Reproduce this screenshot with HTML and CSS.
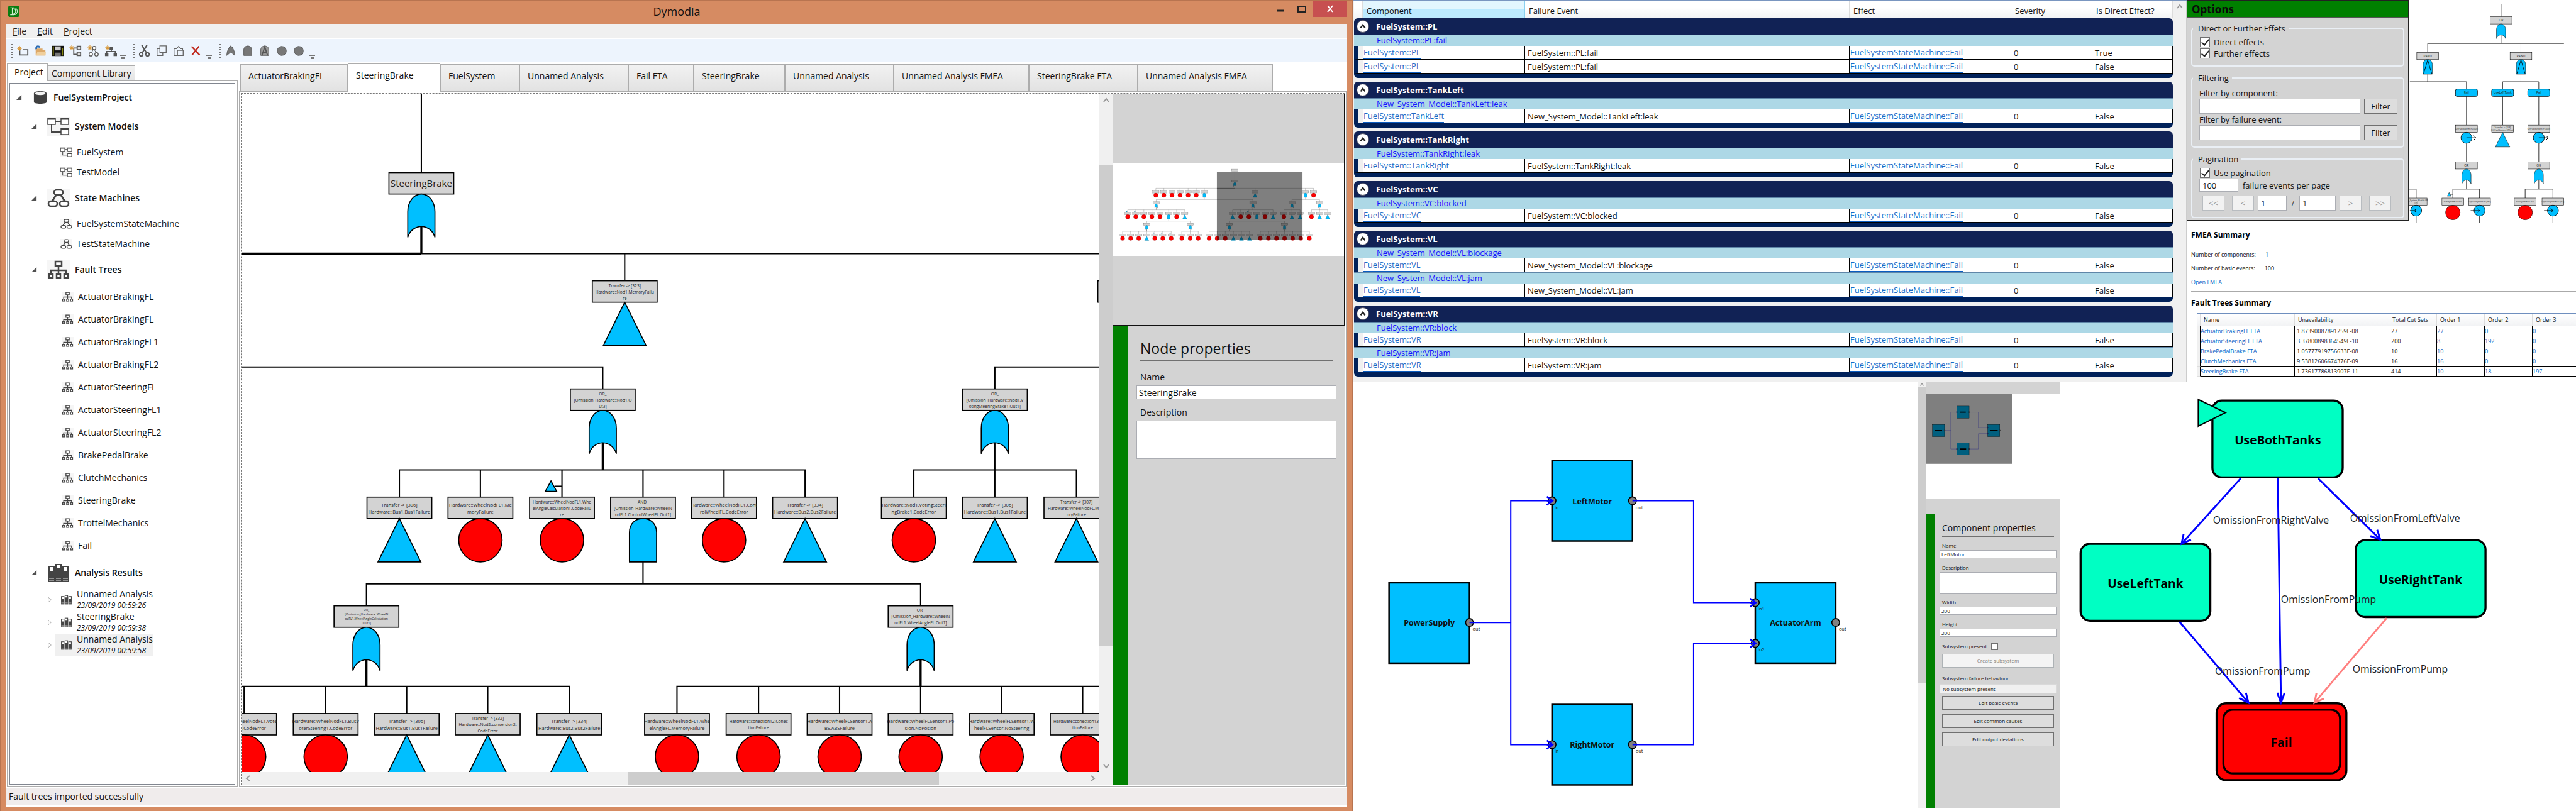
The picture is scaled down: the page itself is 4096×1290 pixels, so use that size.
FILE: index.html
```html
<!DOCTYPE html>
<html lang="en">
<head>
<meta charset="utf-8">
<title>Dymodia</title>
<link rel="stylesheet" href="styles.css">
</head>
<body>
<svg class="defs" width="0" height="0" aria-hidden="true">
  <defs>
    <g id="n-box"><rect x="-62" y="0" width="124" height="41" fill="#d3d3d3" stroke="#000" stroke-width="2"/></g>
    <g id="n-or"><use href="#n-box"/><path d="M-26 124V75C-26 55-14 41 0 41S26 55 26 75V124C22 111 12 104 0 103C-12 104-22 111-26 124Z" fill="#00bfff" stroke="#000" stroke-width="2"/></g>
    <g id="n-and"><use href="#n-box"/><path d="M-26 124V68C-26 50-14 41 0 41S26 50 26 68V124Z" fill="#00bfff" stroke="#000" stroke-width="2"/></g>
    <g id="n-pand"><use href="#n-and"/><path d="M-24 124L0 43L24 124" fill="none" stroke="#000" stroke-width="3"/></g>
    <g id="n-be"><use href="#n-box"/><circle cx="0" cy="82.500" r="41.500" fill="#f00" stroke="#000" stroke-width="2"/></g>
    <g id="n-tr"><use href="#n-box"/><path d="M0 41L41 124H-41Z" fill="#00bfff" stroke="#000" stroke-width="2"/></g>
    <g id="n-tag"><path d="M-21 -31L-10 -11H-32Z" fill="#00bfff" stroke="#000" stroke-width="2"/><path d="M-14 -21H0" stroke="#000" stroke-width="2"/></g>

    <g id="fault-tree">
      <g fill="none" stroke="#000" stroke-width="2.500">
        <path d="M805 160V331M-711 538V486M-556 538V486M-401 538V486M-246 538V486M-91 538V486M64 538V486M219 538V486M1194 538V486M2161 538V486M2316 538V486M-711 486H2316"/>
        <path d="M219 662V703M-704 745V703H1152V745M2161 662V703M1902 745V703H2432V745"/>
        <path d="M-1251 952V900H-156V952M-1096 952V900M-941 952V900M-786 952V900M-631 952V900M-465 952V900M-311 952V900"/>
        <path d="M763 952V900H1539V952M918 952V900M1074 952V900M1229 952V900M1384 952V900M1747 952V900H2058V952M1902 952V848"/>
        <path d="M2277 952V900H2587V952M2432 952V848"/>
        <path d="M-465 1076V1118M-886 1160V1118H-51V1160M1229 1076V1118M700 1160V1118H1760V1160"/>
        <path d="M-1349 1366V1314H-416V1366M-1195 1366V1314M-1040 1366V1314M-886 1366V1263M-732 1366V1314M-578 1366V1314M-213 1366V1314H103V1366M-51 1366V1263"/>
        <path d="M311 1366V1314H1088V1366M466 1366V1314M622 1366V1314M777 1366V1314M932 1366V1314M1294 1366V1314H2236V1366M1450 1366V1314M1605 1366V1314M1760 1366V1314M1915 1366V1314M2070 1366V1314"/>
      </g>
      <g fill="none" stroke="#000" stroke-width="4">
        <path d="M805 434V486M461 486H805M-704 848V900M1152 848V900M700 1263V1314M1760 1263V1314M-886 1263V1314"/>
      </g>
      <use href="#n-box" x="805" y="120"/>
      <use href="#n-or" x="805" y="331"/>
      <use href="#n-be" x="-711" y="538"/><use href="#n-be" x="-556" y="538"/><use href="#n-be" x="-401" y="538"/><use href="#n-be" x="-246" y="538"/><use href="#n-be" x="-91" y="538"/><use href="#n-be" x="64" y="538"/>
      <use href="#n-and" x="219" y="538"/><use href="#n-tr" x="1194" y="538"/><use href="#n-and" x="2161" y="538"/><use href="#n-be" x="2316" y="538"/>
      <use href="#n-or" x="-704" y="745"/><use href="#n-or" x="1152" y="745"/><use href="#n-or" x="1902" y="745"/><use href="#n-or" x="2432" y="745"/>
      <use href="#n-be" x="-1251" y="952"/><use href="#n-be" x="-1096" y="952"/><use href="#n-be" x="-941" y="952"/><use href="#n-be" x="-786" y="952"/><use href="#n-be" x="-631" y="952"/><use href="#n-and" x="-465" y="952"/><use href="#n-be" x="-311" y="952"/><use href="#n-tr" x="-156" y="952"/>
      <use href="#n-tag" x="-1251" y="952"/><use href="#n-tag" x="-1096" y="952"/>
      <use href="#n-tr" x="763" y="952"/><use href="#n-be" x="918" y="952"/><use href="#n-be" x="1074" y="952"/><use href="#n-tag" x="1074" y="952"/><use href="#n-and" x="1229" y="952"/><use href="#n-be" x="1384" y="952"/><use href="#n-tr" x="1539" y="952"/>
      <use href="#n-be" x="1747" y="952"/><use href="#n-tr" x="1902" y="952"/><use href="#n-tr" x="2058" y="952"/>
      <use href="#n-be" x="2277" y="952"/><use href="#n-tr" x="2432" y="952"/><use href="#n-tr" x="2587" y="952"/>
      <use href="#n-or" x="-886" y="1160"/><use href="#n-or" x="-51" y="1160"/><use href="#n-or" x="700" y="1160"/><use href="#n-or" x="1760" y="1160"/>
      <use href="#n-be" x="-1349" y="1366"/><use href="#n-be" x="-1195" y="1366"/><use href="#n-be" x="-1040" y="1366"/><use href="#n-tr" x="-886" y="1366"/><use href="#n-be" x="-732" y="1366"/><use href="#n-be" x="-578" y="1366"/><use href="#n-be" x="-416" y="1366"/>
      <use href="#n-tag" x="-732" y="1366"/><use href="#n-tag" x="-578" y="1366"/><use href="#n-tag" x="-416" y="1366"/>
      <use href="#n-be" x="-213" y="1366"/><use href="#n-be" x="-51" y="1366"/><use href="#n-be" x="103" y="1366"/>
      <use href="#n-be" x="311" y="1366"/><use href="#n-be" x="466" y="1366"/><use href="#n-be" x="622" y="1366"/><use href="#n-tr" x="777" y="1366"/><use href="#n-tr" x="932" y="1366"/><use href="#n-tr" x="1088" y="1366"/>
      <use href="#n-be" x="1294" y="1366"/><use href="#n-be" x="1450" y="1366"/><use href="#n-be" x="1605" y="1366"/><use href="#n-be" x="1760" y="1366"/><use href="#n-be" x="1915" y="1366"/><use href="#n-be" x="2070" y="1366"/><use href="#n-be" x="2236" y="1366"/>
    </g>

    <g id="port"><circle r="7.500" fill="#808080" stroke="#000" stroke-width="2"/></g>
    <g id="arrow"><path d="M-10 -8L1 0L-10 8M-10 0H0" fill="none" stroke="#00f" stroke-width="3"/></g>
    <g id="block"><rect width="154" height="154" fill="#00bfff" stroke="#000" stroke-width="3"/></g>
    <g id="system-model">
      <use href="#block" x="2657" y="1115"/><use href="#block" x="2969" y="881"/><use href="#block" x="2969" y="1348"/><use href="#block" x="3358" y="1115"/>
      <use href="#port" x="2811" y="1191"/><use href="#port" x="2969" y="958"/><use href="#port" x="3123" y="958"/><use href="#port" x="2969" y="1425"/><use href="#port" x="3123" y="1425"/><use href="#port" x="3358" y="1153"/><use href="#port" x="3358" y="1231"/><use href="#port" x="3512" y="1191"/>
      <path d="M2811 1191H2890M2968 958H2890V1425H2968M3123 958H3240V1153H3358M3123 1425H3240V1231H3358" fill="none" stroke="#00f" stroke-width="2.500"/>
      <use href="#arrow" x="2969" y="958"/><use href="#arrow" x="2969" y="1425"/><use href="#arrow" x="3358" y="1153"/><use href="#arrow" x="3358" y="1231"/>
    </g>

    <symbol id="i-model" viewBox="0 0 36 30"><rect width="36" height="30" fill="#f4f4f4"/><path d="M13 7H22M7 12V24H22" fill="none" stroke="#444" stroke-width="2"/><g fill="#fff" stroke="#444" stroke-width="1.500"><rect x="1" y="2" width="12" height="10"/><rect x="22" y="2" width="12" height="10"/><rect x="22" y="18" width="12" height="10"/></g><path d="M1 3H13M22 3H34M22 19H34" stroke="#444" stroke-width="3"/></symbol>
    <symbol id="i-state" viewBox="0 0 36 30"><rect width="36" height="30" fill="#f6f6f6"/><path d="M15 9L8 20M21 9L28 20" stroke="#444" stroke-width="3"/><g fill="#fff" stroke="#444" stroke-width="2.500"><rect x="11" y="2" width="14" height="8" rx="4"/><rect x="2" y="20" width="14" height="8" rx="4"/><rect x="20" y="20" width="14" height="8" rx="4"/></g></symbol>
    <symbol id="i-tree" viewBox="0 0 36 30"><rect width="36" height="30" fill="#f6f6f6"/><path d="M18 9V22M6 22V16H30V22" fill="none" stroke="#444" stroke-width="2.500"/><g fill="#fff" stroke="#444" stroke-width="2.500"><rect x="13" y="2" width="10" height="7"/><rect x="3" y="22" width="6" height="6"/><rect x="15" y="22" width="6" height="6"/><rect x="27" y="22" width="6" height="6"/></g></symbol>
    <symbol id="i-books" viewBox="0 0 36 30"><g fill="#444"><rect x="2" y="4" width="10" height="25"/><rect x="13" y="1" width="10" height="28"/><rect x="24" y="4" width="10" height="25"/></g><path d="M4 6H10V12H4ZM15 3H21V8H15ZM26 6H32V12H26Z" fill="#fff"/><path d="M3 24H11M3 27H11M14 24H22M14 27H22M25 24H33M25 27H33" stroke="#ddd"/></symbol>
    <symbol id="i-db" viewBox="0 0 24 24"><path d="M1 5C1 2 6 1 12 1S23 2 23 5V20C23 22 18 23 12 23S1 22 1 20Z" fill="#404040"/><ellipse cx="12" cy="5" rx="9" ry="3" fill="#f4f4f4"/></symbol>
    <symbol id="i-spark" viewBox="0 0 10 10"><path d="M5 0V10M0 5H10M2 2L8 8M8 2L2 8" stroke="#d99a3c" stroke-width="1.500"/></symbol>
    <symbol id="i-open" viewBox="0 0 10 10"><path d="M9 0V9H0Z" fill="#505050"/></symbol>
    <symbol id="i-shut" viewBox="0 0 10 14"><path d="M2 2L8 7L2 12Z" fill="#fff" stroke="#999"/></symbol>
    <symbol id="i-chev" viewBox="0 0 12 12"><path d="M2 8L6 3L10 8" fill="none" stroke="#999" stroke-width="2"/></symbol>
    <symbol id="i-knob" viewBox="0 0 12 12"><path d="M3 8L6 4L9 8" fill="none" stroke="#222" stroke-width="2"/></symbol>
  </defs>
</svg>

<div class="page">
  <section class="app">
    <header class="titlebar">
      <svg class="logo" viewBox="0 0 22 22"><rect width="22" height="22" rx="3" fill="#0a7d12"/><path d="M4 4H11C20 4 20 18 11 18H4M8 4V18M10 6C16 6 16 16 10 16" fill="none" stroke="#cfeccf" stroke-width="1.500"/></svg>
      <h1>Dymodia</h1>
      <div class="winbtns">
        <button aria-label="Minimise"><svg viewBox="0 0 12 12" width="12" height="12"><path d="M1 9H11" stroke="#222" stroke-width="3"/></svg></button>
        <button aria-label="Maximise"><svg viewBox="0 0 14 12" width="14" height="12"><path d="M1 2H13V11H1Z" fill="none" stroke="#222" stroke-width="2"/></svg></button>
        <button class="close" aria-label="Close"><svg viewBox="0 0 12 12" width="12" height="12"><path d="M2 1L10 11M10 1L2 11" stroke="#fff" stroke-width="2"/></svg></button>
      </div>
    </header>
    <nav class="menubar"><a href="#"><u>F</u>ile</a><a href="#"><u>E</u>dit</a><a href="#"><u>P</u>roject</a></nav>
    <div class="toolbar">
      <div class="group first"><i class="grip"></i>
        <button aria-label="New project"><svg viewBox="0 0 22 22"><path d="M6 8V18H20V9H11" fill="none" stroke="#555" stroke-width="2"/><use href="#i-spark" x="1" y="2" width="9" height="9"/></svg></button>
        <button aria-label="Open"><svg viewBox="0 0 22 22"><path d="M3 7H15V10H20V19H3Z" fill="#dca96a"/><path d="M6 12H21L20 19H4Z" fill="#f0cf9c"/><path d="M4 8C3 2 8 2 10 5" fill="none" stroke="#2c6cb4" stroke-width="3"/></svg></button>
        <button aria-label="Save"><svg viewBox="0 0 22 22"><rect x="1" y="2" width="20" height="18" fill="#111"/><rect x="6" y="3" width="10" height="7" fill="#ccc"/><rect x="6" y="14" width="10" height="6" fill="#777"/><path d="M3 3V19M19 6V19" stroke="#8a8a10" stroke-width="2"/></svg></button>
        <button aria-label="New system model"><svg viewBox="0 0 22 22"><path d="M8 6H14M8 6V17H14" fill="none" stroke="#555" stroke-width="2"/><path d="M14 3H20V9H14ZM14 13H20V19H14Z" fill="#ddd" stroke="#555" stroke-width="2"/><use href="#i-spark" x="0" y="1" width="9" height="9"/></svg></button>
        <button aria-label="New state machine"><svg viewBox="0 0 22 22"><path d="M12 7L8 15M12 7L17 15" stroke="#555"/><g fill="#fff" stroke="#555" stroke-width="1.500"><circle cx="13" cy="6" r="3"/><circle cx="7" cy="17" r="3"/><circle cx="17" cy="17" r="3"/></g><use href="#i-spark" x="1" y="1" width="9" height="9"/></svg></button>
        <button aria-label="New fault tree"><svg viewBox="0 0 22 22"><path d="M12 5V12M4 17V12H19V17" fill="none" stroke="#555" stroke-width="2"/><path d="M9 4H15V9H9ZM1 15H7V20H1ZM16 15H22V20H16Z" fill="#555"/><use href="#i-spark" x="1" y="1" width="9" height="9"/></svg></button>
        <i class="more"></i></div>
      <div class="group"><i class="grip"></i>
        <button aria-label="Cut"><svg viewBox="0 0 22 22"><path d="M6 1L14 14M15 1L7 14" stroke="#555" stroke-width="2.500"/><circle cx="5" cy="17" r="3" fill="none" stroke="#555" stroke-width="2"/><circle cx="16" cy="17" r="3" fill="none" stroke="#555" stroke-width="2"/></svg></button>
        <button aria-label="Copy"><svg viewBox="0 0 22 22"><path d="M8 2H19V14H8ZM8 7H3V19H13V14" fill="none" stroke="#666" stroke-width="1.500"/></svg></button>
        <button aria-label="Paste"><svg viewBox="0 0 22 22"><path d="M9 19H3V7H7L11 3L15 7H18V10M9 10H19V19H9Z" fill="none" stroke="#666" stroke-width="1.500"/></svg></button>
        <button aria-label="Delete"><svg viewBox="0 0 22 22"><path d="M4 3L18 18M17 3L5 18" stroke="#c0281c" stroke-width="2.500"/></svg></button>
        <i class="more"></i></div>
      <div class="group"><i class="grip"></i>
        <button aria-label="OR gate"><svg viewBox="0 0 22 22"><path d="M4 19C4 11 8 4 11 2C14 4 18 11 18 19L11 13Z" fill="#777" stroke="#555"/></svg></button>
        <button aria-label="AND gate"><svg viewBox="0 0 22 22"><path d="M4 19V9C4 0 18 0 18 9V19Z" fill="#777" stroke="#555"/></svg></button>
        <button aria-label="PAND gate"><svg viewBox="0 0 22 22"><path d="M4 19V9C4 0 18 0 18 9V19Z" fill="#999" stroke="#555"/><path d="M6 19L11 4L16 19M8 14H14" fill="none" stroke="#555" stroke-width="2"/></svg></button>
        <button aria-label="Basic event"><svg viewBox="0 0 22 22"><circle cx="11" cy="11" r="8" fill="#777" stroke="#555"/></svg></button>
        <button aria-label="Input"><svg viewBox="0 0 22 22"><circle cx="11" cy="11" r="8" fill="#777" stroke="#555"/></svg></button>
        <i class="more"></i></div>
    </div>

    <div class="workspace">
      <aside class="explorer">
        <div class="sidetabs"><button class="active">Project</button><button>Component Library</button></div>
        <div class="frame"><ul class="tree">
          <li class="project"><svg class="tw"><use href="#i-open"/></svg><svg class="ic"><use href="#i-db"/></svg>FuelSystemProject</li>
          <li class="head"><svg class="tw"><use href="#i-open"/></svg><svg class="ic"><use href="#i-model"/></svg>System Models</li>
          <li class="item"><svg class="ic"><use href="#i-model"/></svg>FuelSystem</li>
          <li class="item"><svg class="ic"><use href="#i-model"/></svg>TestModel</li>
          <li class="head"><svg class="tw"><use href="#i-open"/></svg><svg class="ic"><use href="#i-state"/></svg>State Machines</li>
          <li class="item"><svg class="ic"><use href="#i-state"/></svg>FuelSystemStateMachine</li>
          <li class="item"><svg class="ic"><use href="#i-state"/></svg>TestStateMachine</li>
          <li class="head"><svg class="tw"><use href="#i-open"/></svg><svg class="ic"><use href="#i-tree"/></svg>Fault Trees</li>
          <li class="item ft"><svg class="ic"><use href="#i-tree"/></svg>ActuatorBrakingFL</li>
          <li class="item ft"><svg class="ic"><use href="#i-tree"/></svg>ActuatorBrakingFL</li>
          <li class="item ft"><svg class="ic"><use href="#i-tree"/></svg>ActuatorBrakingFL1</li>
          <li class="item ft"><svg class="ic"><use href="#i-tree"/></svg>ActuatorBrakingFL2</li>
          <li class="item ft"><svg class="ic"><use href="#i-tree"/></svg>ActuatorSteeringFL</li>
          <li class="item ft"><svg class="ic"><use href="#i-tree"/></svg>ActuatorSteeringFL1</li>
          <li class="item ft"><svg class="ic"><use href="#i-tree"/></svg>ActuatorSteeringFL2</li>
          <li class="item ft"><svg class="ic"><use href="#i-tree"/></svg>BrakePedalBrake</li>
          <li class="item ft"><svg class="ic"><use href="#i-tree"/></svg>ClutchMechanics</li>
          <li class="item ft"><svg class="ic"><use href="#i-tree"/></svg>SteeringBrake</li>
          <li class="item ft"><svg class="ic"><use href="#i-tree"/></svg>TrottelMechanics</li>
          <li class="item ft"><svg class="ic"><use href="#i-tree"/></svg>Fail</li>
          <li class="head"><svg class="tw"><use href="#i-open"/></svg><svg class="ic"><use href="#i-books"/></svg>Analysis Results</li>
          <li class="result"><svg class="tw"><use href="#i-shut"/></svg><span class="pick"><svg class="ic"><use href="#i-books"/></svg><span>Unnamed Analysis<em>23/09/2019 00:59:26</em></span></span></li>
          <li class="result"><svg class="tw"><use href="#i-shut"/></svg><span class="pick"><svg class="ic"><use href="#i-books"/></svg><span>SteeringBrake<em>23/09/2019 00:59:38</em></span></span></li>
          <li class="result"><svg class="tw"><use href="#i-shut"/></svg><span class="pick selected"><svg class="ic"><use href="#i-books"/></svg><span>Unnamed Analysis<em>23/09/2019 00:59:58</em></span></span></li>
        </ul></div>
      </aside>

      <main class="editor">
        <div class="doctabs"><button>ActuatorBrakingFL</button><button class="active">SteeringBrake</button><button>FuelSystem</button><button>Unnamed Analysis</button><button>Fail FTA</button><button>SteeringBrake</button><button>Unnamed Analysis</button><button>Unnamed Analysis FMEA</button><button>SteeringBrake FTA</button><button>Unnamed Analysis FMEA</button></div>
        <div class="docframe"><div class="doc">
          <svg class="canvas" viewBox="461 180 1643 1298" preserveAspectRatio="xMinYMin slice">
            <use href="#fault-tree"/>
            <g class="label" text-anchor="middle">
              <text class="big" x="805" y="358">SteeringBrake</text>
              <g class="s">
                <text x="1194" y="550">Transfer -&gt; [323]</text><text x="1194" y="562">Hardware::Nod1.MemoryFailu</text><text x="1194" y="574">re</text>
                <text x="1152" y="757">OR_</text><text x="1152" y="769">[Omission_Hardware::Nod1.O</text><text x="1152" y="781">ut3]</text>
                <text x="1902" y="757">OR_</text><text x="1902" y="769">[Omission_Hardware::Nod1.V</text><text x="1902" y="781">otingSteeringBrake1.Out1]</text>
                <text x="1074" y="964">Hardware::WheelNodFL1.Whe</text><text x="1074" y="976">elAngleCalculation1.CodeFailu</text><text x="1074" y="988">re</text>
                <text x="1229" y="964">AND_</text><text x="1229" y="976">[Omission_Hardware::WheelN</text><text x="1229" y="988">odFL1.ControlWheelFL.Out1]</text>
                <text x="2058" y="964">Transfer -&gt; [307]</text><text x="2058" y="976">Hardware::WheelNodFL.Mem</text><text x="2058" y="988">oryFailure</text>
                <text x="1760" y="1171">OR_</text><text x="1760" y="1183">[Omission_Hardware::WheelN</text><text x="1760" y="1195">odFL1.WheelAngleFL.Out1]</text>
                <text x="932" y="1378">Transfer -&gt; [332]</text><text x="932" y="1390">Hardware::Nod2.conversion2.</text><text x="932" y="1402">CodeError</text>
                <text x="1450" y="1384">Hardware::conection12.Conec</text><text x="1450" y="1396">tionFailure</text>
                <text x="2070" y="1384">Hardware::conection13.Conec</text><text x="2070" y="1396">tionFailure</text>
              </g>
              <g class="xs"><text x="700" y="1170">OR_</text><text x="700" y="1178">[Omission_Hardware::WheelN</text><text x="700" y="1187">odFL1.WheelAngleCalculation</text><text x="700" y="1195">.Out1]</text></g>
              <g class="m">
                <text x="763" y="970">Transfer -&gt; [306]</text><text x="763" y="983">Hardware::Bus1.Bus1Failure</text>
                <text x="918" y="970">Hardware::WheelNodFL1.Me</text><text x="918" y="983">moryFailure</text>
                <text x="1384" y="970">Hardware::WheelNodFL1.Cont</text><text x="1384" y="983">rolWheelFL.CodeError</text>
                <text x="1539" y="970">Transfer -&gt; [334]</text><text x="1539" y="983">Hardware::Bus2.Bus2Failure</text>
                <text x="1747" y="970">Hardware::Nod1.VotingSteeri</text><text x="1747" y="983">ngBrake1.CodeError</text>
                <text x="1902" y="970">Transfer -&gt; [306]</text><text x="1902" y="983">Hardware::Bus1.Bus1Failure</text>
                <text x="466" y="1384">Hardware::WheelNodFL1.Vote</text><text x="466" y="1397">rSteering.CodeError</text>
                <text x="622" y="1384">Hardware::WheelNodFL1.BusV</text><text x="622" y="1397">oterSteering1.CodeError</text>
                <text x="777" y="1384">Transfer -&gt; [306]</text><text x="777" y="1397">Hardware::Bus1.Bus1Failure</text>
                <text x="1088" y="1384">Transfer -&gt; [334]</text><text x="1088" y="1397">Hardware::Bus2.Bus2Failure</text>
                <text x="1294" y="1384">Hardware::WheelNodFL1.Whe</text><text x="1294" y="1397">elAngleFL.MemoryFailure</text>
                <text x="1605" y="1384">Hardware::WheelFLSensor1.A</text><text x="1605" y="1397">BS.ABSFailure</text>
                <text x="1760" y="1384">Hardware::WheelFLSensor1.Po</text><text x="1760" y="1397">sion.NoPosion</text>
                <text x="1915" y="1384">Hardware::WheelFLSensor1.W</text><text x="1915" y="1397">heelFLSensor.NoSteering</text>
              </g>
            </g>
          </svg>
          <div class="hscroll"><svg><use href="#i-chev" transform="rotate(-90 6 6)"/></svg><i></i><svg class="end"><use href="#i-chev" transform="rotate(90 6 6)"/></svg></div>
          <div class="vscroll"><svg><use href="#i-chev"/></svg><i></i><svg class="end"><use href="#i-chev" transform="rotate(180 6 6)"/></svg></div>
          <div class="inspector">
            <div class="preview"><svg viewBox="-1530 11 4430 1778"><rect x="-1530" y="11" width="4430" height="1778" fill="#fff"/><use href="#fault-tree"/><rect x="461" y="180" width="1643" height="1298" fill="#000" fill-opacity="0.5"/></svg></div>
            <form class="props">
              <h2>Node properties</h2>
              <label for="node-name">Name</label><input id="node-name" value="SteeringBrake">
              <label for="node-desc">Description</label><textarea id="node-desc"></textarea>
            </form>
          </div>
        </div></div>
      </main>
    </div>
    <footer class="status">Fault trees imported successfully</footer>
  </section>

  <div class="right">
    <div class="upper">
      <section class="fmea">
        <table>
          <colgroup><col class="c0"><col class="c1"><col class="c2"><col class="c3"><col class="c4"><col class="c5"></colgroup>
          <thead><tr><th></th><th class="sorted">Component</th><th>Failure Event</th><th>Effect</th><th>Severity</th><th>Is Direct Effect?</th></tr></thead>
          <tbody>
            <tr class="gh"><th colspan="6"><span class="knob"><svg><use href="#i-knob"/></svg></span>FuelSystem::PL</th></tr>
            <tr class="sub"><th colspan="6">FuelSystem::PL:fail</th></tr>
            <tr><td class="gut"></td><td><a href="#">FuelSystem::PL</a></td><td>FuelSystem::PL:fail</td><td><a href="#">FuelSystemStateMachine::Fail</a></td><td>0</td><td>True</td></tr>
            <tr><td class="gut"></td><td><a href="#">FuelSystem::PL</a></td><td>FuelSystem::PL:fail</td><td><a href="#">FuelSystemStateMachine::Fail</a></td><td>0</td><td>False</td></tr>
            <tr class="gf"><td colspan="6"><div></div></td></tr>
          </tbody>
          <tbody>
            <tr class="gh"><th colspan="6"><span class="knob"><svg><use href="#i-knob"/></svg></span>FuelSystem::TankLeft</th></tr>
            <tr class="sub"><th colspan="6">New_System_Model::TankLeft:leak</th></tr>
            <tr><td class="gut"></td><td><a href="#">FuelSystem::TankLeft</a></td><td>New_System_Model::TankLeft:leak</td><td><a href="#">FuelSystemStateMachine::Fail</a></td><td>0</td><td>False</td></tr>
            <tr class="gf"><td colspan="6"><div></div></td></tr>
          </tbody>
          <tbody>
            <tr class="gh"><th colspan="6"><span class="knob"><svg><use href="#i-knob"/></svg></span>FuelSystem::TankRight</th></tr>
            <tr class="sub"><th colspan="6">FuelSystem::TankRight:leak</th></tr>
            <tr><td class="gut"></td><td><a href="#">FuelSystem::TankRight</a></td><td>FuelSystem::TankRight:leak</td><td><a href="#">FuelSystemStateMachine::Fail</a></td><td>0</td><td>False</td></tr>
            <tr class="gf"><td colspan="6"><div></div></td></tr>
          </tbody>
          <tbody>
            <tr class="gh"><th colspan="6"><span class="knob"><svg><use href="#i-knob"/></svg></span>FuelSystem::VC</th></tr>
            <tr class="sub"><th colspan="6">FuelSystem::VC:blocked</th></tr>
            <tr><td class="gut"></td><td><a href="#">FuelSystem::VC</a></td><td>FuelSystem::VC:blocked</td><td><a href="#">FuelSystemStateMachine::Fail</a></td><td>0</td><td>False</td></tr>
            <tr class="gf"><td colspan="6"><div></div></td></tr>
          </tbody>
          <tbody>
            <tr class="gh"><th colspan="6"><span class="knob"><svg><use href="#i-knob"/></svg></span>FuelSystem::VL</th></tr>
            <tr class="sub"><th colspan="6">New_System_Model::VL:blockage</th></tr>
            <tr><td class="gut"></td><td><a href="#">FuelSystem::VL</a></td><td>New_System_Model::VL:blockage</td><td><a href="#">FuelSystemStateMachine::Fail</a></td><td>0</td><td>False</td></tr>
            <tr class="sub"><th colspan="6">New_System_Model::VL:jam</th></tr>
            <tr><td class="gut"></td><td><a href="#">FuelSystem::VL</a></td><td>New_System_Model::VL:jam</td><td><a href="#">FuelSystemStateMachine::Fail</a></td><td>0</td><td>False</td></tr>
            <tr class="gf"><td colspan="6"><div></div></td></tr>
          </tbody>
          <tbody>
            <tr class="gh"><th colspan="6"><span class="knob"><svg><use href="#i-knob"/></svg></span>FuelSystem::VR</th></tr>
            <tr class="sub"><th colspan="6">FuelSystem::VR:block</th></tr>
            <tr><td class="gut"></td><td><a href="#">FuelSystem::VR</a></td><td>FuelSystem::VR:block</td><td><a href="#">FuelSystemStateMachine::Fail</a></td><td>0</td><td>False</td></tr>
            <tr class="sub"><th colspan="6">FuelSystem::VR:jam</th></tr>
            <tr><td class="gut"></td><td><a href="#">FuelSystem::VR</a></td><td>FuelSystem::VR:jam</td><td><a href="#">FuelSystemStateMachine::Fail</a></td><td>0</td><td>False</td></tr>
            <tr class="gf"><td colspan="6"><div></div></td></tr>
          </tbody>
        </table>
        <div class="rail"><svg><use href="#i-chev"/></svg></div>
      </section>

      <div class="side">
        <div class="sidetop">
          <form class="options">
            <h2>Options</h2>
            <fieldset class="f1"><legend>Direct or Further Effets</legend>
              <label class="check"><input type="checkbox" checked>Direct effects</label>
              <label class="check"><input type="checkbox" checked>Further effects</label>
            </fieldset>
            <fieldset class="f2"><legend>Filtering</legend>
              <label for="fc">Filter by component:</label>
              <div class="line"><input id="fc" class="wide"><button type="button">Filter</button></div>
              <label for="ff">Filter by failure event:</label>
              <div class="line"><input id="ff" class="wide"><button type="button">Filter</button></div>
            </fieldset>
            <fieldset class="f3"><legend>Pagination</legend>
              <label class="check"><input type="checkbox" checked>Use pagination</label>
              <div class="per"><input id="pp" value="100"><label for="pp">failure events per page</label></div>
              <div class="pager"><button type="button" disabled>&lt;&lt;</button><button type="button" disabled>&lt;</button><input aria-label="Page" value="1"><span>/</span><input class="total" aria-label="Pages" value="1"><button type="button" disabled>&gt;</button><button type="button" disabled>&gt;&gt;</button></div>
            </fieldset>
          </form>
          <svg class="pandtree" viewBox="4610 0 318 427" preserveAspectRatio="xMinYMin slice">
            <g fill="none" stroke="#333" stroke-width="1.200">
              <path d="M4785 8V32M4785 66V83M4645 100V83H4905M4823 83V100M4645 142V156M4611 156H4719V170M4823 142V156M4788 170V156H4857V170M4719 184V239M4788 184V239M4857 184V239M4719 274V309M4857 274V309M4719 343V361M4693 378V361H4744V378M4857 343V361M4831 378V361H4884V378M4610 361H4623V378M4623 413V427M4744 413V427M4884 413V427"/>
            </g>
            <g><use href="#n-or" transform="translate(4785 32) scale(.335)"/><use href="#n-pand" transform="translate(4645 100) scale(.335)"/><use href="#n-pand" transform="translate(4823 100) scale(.335)"/><use href="#n-box" transform="translate(4719 239) scale(.335)"/><use href="#n-tr" transform="translate(4788 239) scale(.335)"/><use href="#n-box" transform="translate(4857 239) scale(.335)"/><use href="#n-or" transform="translate(4719 309) scale(.335)"/><use href="#n-or" transform="translate(4857 309) scale(.335)"/><use href="#n-box" transform="translate(4623 378) scale(.335)"/><use href="#n-be" transform="translate(4693 378) scale(.335)"/><use href="#n-box" transform="translate(4744 378) scale(.335)"/><use href="#n-be" transform="translate(4831 378) scale(.335)"/><use href="#n-box" transform="translate(4884 378) scale(.335)"/><use href="#n-tag" transform="translate(4693 378) scale(.335)"/></g>
            <g fill="#00bfff" stroke="#000"><rect x="4698" y="170" width="42" height="14" rx="3"/><rect x="4767" y="170" width="42" height="14" rx="3"/><rect x="4836" y="170" width="42" height="14" rx="3"/><circle cx="4719" cy="263" r="10.500"/><circle cx="4857" cy="263" r="10.500"/><circle cx="4623" cy="402" r="10.500"/><circle cx="4744" cy="402" r="10.500"/><circle cx="4884" cy="402" r="10.500"/></g>
            <path d="M4719 263H4737M4733 259L4737 263L4733 267M4857 263H4875M4871 259L4875 263L4871 267M4727 402H4744M4740 398L4744 402L4740 406M4867 402H4884M4880 398L4884 402L4880 406M4611 402H4623M4619 398L4623 402L4619 406" fill="none" stroke="#000" stroke-width="1.200"/>
            <g class="label p" text-anchor="middle"><text x="4785" y="41">OR</text><text x="4645" y="109">PAND</text><text x="4823" y="109">PAND</text><text x="4719" y="179">Fail</text><text x="4788" y="179">UseLeftTank</text><text x="4857" y="179">Fail</text><text x="4719" y="318">OR</text><text x="4857" y="318">OR</text></g>
            <g class="label q" text-anchor="middle"><text x="4719" y="247">O@FuelSystem::PL[out]</text><text x="4788" y="245">Transfer -&gt; [158]</text><text x="4788" y="250">O@FuelSystem::VR[out]</text><text x="4857" y="247">O@FuelSystem::PL[out]</text><text x="4623" y="384">New_System_Model::VR</text><text x="4623" y="389">[in]</text><text x="4693" y="386">FuelSystem::PL:fail</text><text x="4744" y="386">O@FuelSystem::PL[in2]</text><text x="4831" y="386">FuelSystem::PL:fail</text><text x="4884" y="386">O@FuelSystem::PL[in1]</text></g>
          </svg>
        </div>
        <section class="report">
          <h3>FMEA Summary</h3>
          <p>Number of components:<span>1</span></p>
          <p>Number of basic events:<span>100</span></p>
          <p><a href="#">Open FMEA</a></p>
          <hr>
          <h3>Fault Trees Summary</h3>
          <table>
            <colgroup><col class="g"><col class="w"><col class="w"><col class="n"><col class="n"><col class="n"><col></colgroup>
            <thead><tr><th></th><th>Name</th><th>Unavailability</th><th>Total Cut Sets</th><th>Order 1</th><th>Order 2</th><th>Order 3</th></tr></thead>
            <tbody>
              <tr><td class="g"></td><td><a href="#">ActuatorBrakingFL FTA</a></td><td>1.87390087891259E-08</td><td>27</td><td><a href="#">27</a></td><td><a href="#">0</a></td><td><a href="#">0</a></td></tr>
              <tr><td class="g"></td><td><a href="#">ActuatorSteeringFL FTA</a></td><td>3.37800898364549E-10</td><td>200</td><td><a href="#">8</a></td><td><a href="#">192</a></td><td><a href="#">0</a></td></tr>
              <tr><td class="g"></td><td><a href="#">BrakePedalBrake FTA</a></td><td>1.05777919756633E-08</td><td>10</td><td><a href="#">10</a></td><td><a href="#">0</a></td><td><a href="#">0</a></td></tr>
              <tr><td class="g"></td><td><a href="#">ClutchMechanics FTA</a></td><td>9.53812606674376E-09</td><td>16</td><td><a href="#">16</a></td><td><a href="#">0</a></td><td><a href="#">0</a></td></tr>
              <tr><td class="g"></td><td><a href="#">SteeringBrake FTA</a></td><td>1.73617786813907E-11</td><td>414</td><td><a href="#">10</a></td><td><a href="#">18</a></td><td><a href="#">197</a></td></tr>
            </tbody>
          </table>
        </section>
      </div>
    </div>

    <div class="lower">
      <section class="modeller">
        <svg class="diagram" viewBox="2590 731 1080 821" preserveAspectRatio="xMinYMin slice">
          <use href="#system-model"/>
          <g class="label name" text-anchor="middle"><text x="2734" y="1197">PowerSupply</text><text x="3046" y="964">LeftMotor</text><text x="3046" y="1431">RightMotor</text><text x="3435" y="1197">ActuatorArm</text></g>
          <g class="label m"><text x="2817" y="1207">out</text><text x="2974" y="974">in</text><text x="3129" y="974">out</text><text x="2974" y="1440">in</text><text x="3129" y="1440">out</text><text x="3363" y="1168">in1</text><text x="3363" y="1246">in2</text><text x="3518" y="1207">out</text></g>
        </svg>
        <div class="vscroll slim"><svg><use href="#i-chev"/></svg><i></i></div>
        <div class="inspector small">
          <div class="preview"><svg viewBox="2580 730 1085 884"><rect x="2580" y="730" width="1085" height="884" fill="#fff"/><use href="#system-model"/><path d="M2690 1192H2780M3010 959H3080M3005 1426H3085M3385 1192H3485" stroke="#000" stroke-width="14"/><rect x="2580" y="730" width="1085" height="884" fill="#000" fill-opacity="0.5"/></svg></div>
          <form class="props">
            <h2>Component properties</h2>
            <label for="cn">Name</label><input id="cn" value="LeftMotor">
            <label for="cd">Description</label><textarea id="cd"></textarea>
            <label for="cw">Width</label><input id="cw" value="200">
            <label for="ch">Height</label><input id="ch" value="200">
            <label class="has">Subsystem present:<input type="checkbox"></label>
            <button type="button" disabled>Create subsystem</button>
            <label for="sf" class="fail">Subsystem failure behaviour</label>
            <select id="sf" disabled><option>No subsystem present</option></select>
            <button type="button">Edit basic events</button>
            <button type="button">Edit common causes</button>
            <button type="button">Edit output deviations</button>
          </form>
        </div>
      </section>
      <svg class="states" viewBox="3941 731 987 821" preserveAspectRatio="xMinYMin slice">
        <g stroke="#000" stroke-width="4"><g fill="#00ffc3"><rect x="4233" y="766" width="249" height="147" rx="18"/><path d="M4206 764L4258 789L4206 815Z" stroke-width="2.500"/><rect x="3981" y="1040" width="248" height="147" rx="18"/><rect x="4507" y="1033" width="248" height="147" rx="18"/></g><g fill="#f00"><rect x="4241" y="1345" width="248" height="147" rx="18"/><rect x="4254" y="1357" width="223" height="122" rx="18"/></g></g>
        <g fill="none" stroke="#00f" stroke-width="3.500"><path d="M4287 915L4174 1040M4178 1021L4174 1040L4192 1032M4358 915L4364 1344M4357 1325L4364 1344L4371 1325M4435 915L4554 1032M4548 1013L4554 1032L4535 1025M4170 1189L4302 1344M4297 1325L4302 1344L4284 1335"/><path d="M4566 1182L4428 1344M4432 1325L4428 1344L4446 1336" stroke="#ff8080"/></g>
        <g class="label trans"><text x="4234" y="1002">OmissionFromRightValve</text><text x="4496" y="998">OmissionFromLeftValve</text><text x="4364" y="1153">OmissionFromPump</text><text x="4238" y="1290">OmissionFromPump</text><text x="4501" y="1287">OmissionFromPump</text></g>
        <g class="label st" text-anchor="middle"><text x="4358" y="850">UseBothTanks</text><text x="4105" y="1124">UseLeftTank</text><text x="4631" y="1117">UseRightTank</text><text x="4365" y="1428">Fail</text></g>
      </svg>
    </div>
  </div>
</div>
</body>
</html>
```
FILE: styles.css
```css
* { box-sizing: border-box; }
html, body { margin: 0; }
body { font: 14px/20px "Open Sans", "Noto Sans", sans-serif; color: #111; background: #fff; }
button, input, textarea, select { font: inherit; color: inherit; margin: 0; border-radius: 0; outline: 0; }
button { background: none; border: 0; padding: 0; white-space: nowrap; }
h1, h2, h3, p, ul { margin: 0; padding: 0; font-weight: 400; }
svg { display: block; }
.defs { position: absolute; }

.page { display: grid; grid-template-columns: 2151fr 1945fr; height: 100vh; overflow: hidden; }

/* main window */
.app { display: flex; flex-direction: column; min-width: 0; min-height: 0; padding: 0 8px 6px; background: #d68b62; border: 1px solid #b87450; border-width: 1px 1px 0; }
.titlebar { display: flex; align-items: flex-start; height: 37px; flex: none; }
.logo { width: 18px; height: 18px; margin: 8px 0 0 4px; }
.titlebar h1 { flex: 1; padding-right: 18px; text-align: center; font-size: 18px; line-height: 34px; }
.winbtns { display: flex; margin-left: -120px; }
.winbtns button { width: 34px; height: 26px; display: grid; place-items: center; }
.winbtns .close { width: 55px; background: #c75050; }
.menubar { display: flex; gap: 17px; height: 22px; padding-left: 11px; line-height: 24px; background: #f0f0f0; flex: none; }
.menubar a { color: #222; text-decoration: none; }
.toolbar { display: flex; height: 39px; border-top: 2px solid #fff; background: #edf4fd; flex: none; padding-left: 8px; }
.group { display: flex; align-items: center; margin-right: 9px; }
.group button { width: 27px; height: 24px; display: grid; place-items: center; }
.group.first { margin-right: 7px; }
.group.first button { width: 28px; }
.group svg { width: 20px; height: 20px; }
.grip { width: 3px; height: 22px; margin-right: 2px; background: repeating-linear-gradient(#777 0 2px, transparent 2px 4px); }
.more { width: 9px; height: 6px; margin: 20px 2px 0 4px; border-top: 1px solid #777; background: linear-gradient(#777, #777) center bottom / 5px 3px no-repeat; }
.first .more { margin-left: 1px; margin-right: 4px; }
.workspace { flex: 1; min-height: 0; display: flex; gap: 2px; background: #fff; padding: 2px 0; }

/* project explorer */
.explorer { width: 369px; flex: none; padding-left: 2px; display: flex; flex-direction: column; }
.sidetabs { display: flex; align-items: flex-end; height: 27px; flex: none; }
.sidetabs button { height: 24px; width: 139px; padding: 0 5px; text-align: left; border: 1px solid #acacac; border-bottom: 0; background: linear-gradient(#f2f2f2, #e4e4e4); }
.sidetabs .active { width: 65px; height: 28px; padding: 0 0 2px 11px; margin-bottom: -1px; background: #fff; z-index: 1; }
.frame { flex: 1; border: 1px solid #acacac; padding: 3px; }
.tree { height: 100%; border: 1px solid #828790; list-style: none; padding-top: 1px; }
.tree li { display: flex; align-items: center; }
.tree .project { height: 42px; padding-left: 10px; font-weight: 600; }
.project .tw, .head .tw { width: 9px; height: 9px; }
.project .ic { width: 22px; height: 24px; margin: 0 10px 0 18px; }
.tree .head { height: 50px; padding-left: 34px; font-weight: 600; }
.head .ic { width: 36px; height: 30px; margin: 0 8px 0 16px; }
.tree .item { height: 32px; padding-left: 80px; }
.item .ic, .result .ic { width: 19px; height: 16px; margin-right: 7px; }
.tree .ft { height: 36px; padding-left: 82px; }
.ft .ic { height: 18px; }
.tree .result { height: 36px; padding-left: 59px; line-height: 18px; }
.result .tw { width: 8px; height: 12px; margin-right: 5px; }
.pick { display: flex; align-items: center; height: 36px; padding-left: 8px; }
.pick.selected { background: #f0f0f0; }
.result em { display: block; font-size: 12px; }

/* document area */
.editor { flex: 1; min-width: 0; display: flex; flex-direction: column; }
.doctabs { display: grid; grid-template-columns: 171px 147px 126px 173px 104px 145px 173px 215px 173px 215px; align-items: end; height: 44px; padding-left: 2px; flex: none; }
.doctabs button { height: 43px; padding: 0 12px 6px; text-align: left; border: 1px solid #acacac; border-bottom: 0; background: linear-gradient(#f2f2f2, #e2e2e2); }
.doctabs .active { height: 45px; margin-bottom: -1px; padding-bottom: 8px; background: #fff; z-index: 1; }
.docframe { flex: 1; min-height: 0; border: 1px solid #acacac; padding: 2px; }
.doc { height: 100%; display: grid; grid-template: minmax(0, 1fr) 20px / minmax(0, 1fr) 21px 369px; border: 1px dashed #777; }
.canvas { grid-area: 1 / 1; width: 100%; height: 100%; overflow: hidden; }
.hscroll { grid-area: 2 / 1; display: grid; grid-template-columns: 615fr 496fr 255fr; background: #f0f0f0; align-items: center; }
.vscroll { grid-area: 1 / 2 / 3; display: grid; grid-template-rows: 113fr 766fr 220fr; background: #f0f0f0; justify-items: center; }
.hscroll i, .vscroll i { width: 100%; height: 100%; background: #cdcdcd; }
.hscroll svg, .vscroll svg, .rail svg { width: 12px; height: 12px; }
.hscroll svg { margin-left: 5px; }
.hscroll .end { justify-self: end; margin-right: 5px; }
.vscroll svg { margin-top: 5px; }
.vscroll .end { align-self: end; margin-bottom: 24px; }
.inspector { grid-area: 1 / 3 / 3; display: flex; flex-direction: column; background: #d3d3d3; min-width: 0; }
.preview { aspect-ratio: 1; border: 1px solid #111; display: flex; align-items: center; background: #d3d3d3; }
.preview svg { width: 100%; }
.props { flex: 1; display: flex; flex-direction: column; border-left: 25px solid #008000; padding: 18px 13px 0; }
.props h2 { margin: 0 6px 12px; height: 39px; border-bottom: 2px solid #707070; font-size: 23px; line-height: 36px; }
.props label { margin: 0 6px; line-height: 26px; }
.props input, .props textarea { height: 22px; padding: 0 3px; border: 1px solid #abadb3; background: #fff; resize: none; flex: none; }
.props input { margin-bottom: 8px; }
.props textarea { height: 61px; }
.status { height: 26px; margin-bottom: 4px; padding-left: 5px; line-height: 26px; background: #f0ecec; box-shadow: 0 4px #fff; flex: none; }

.label { fill: #222; }
.label .big { font-size: 18px; }
.label .s, .label.s { font-size: 8px; }
.label .m, .label.m { font-size: 9px; }
.label .xs { font-size: 6px; }
.label.name { font-size: 15px; font-weight: 700; fill: #111; }
.label.trans { font-size: 19px; }
.label.st { font-size: 23px; font-weight: 700; fill: #000; }
.label.p { font-size: 6px; }
.label.q { font-size: 4px; }

/* right half */
.right { display: flex; flex-direction: column; min-width: 0; min-height: 0; }
.upper { display: grid; grid-template-columns: 1326fr 619fr; height: 608px; flex: none; }
.fmea { display: flex; padding-left: 2px; background: #f0f0f0; border-top: 1px solid #7a96c0; min-width: 0; font-size: 13px; }
.fmea table { flex: 1; align-self: flex-start; table-layout: fixed; border-collapse: separate; border-spacing: 0; width: 0; border-right: 1px solid #6f8fbf; background: #f0f0f0; }
.c0 { width: 14px; } .c1 { width: 258px; } .c2 { width: 516px; } .c3 { width: 257px; } .c4 { width: 129px; }
.fmea th, .fmea td { padding: 0; text-align: left; font-weight: 400; line-height: 20px; white-space: nowrap; }
.fmea thead th { height: 28px; padding: 4px 0 0 6px; background: linear-gradient(#fff 40%, #f2f3f5); border-right: 1px solid #dcdcdc; }
.fmea thead .sorted { background: linear-gradient(#e3f6fe 45%, #bceaff 50%); border-color: #8ad0f0; }
.fmea .gh th { height: 26px; padding: 0; background: #112255; color: #fff; font-weight: 700; border-radius: 6px 6px 0 0; }
.knob { display: inline-grid; place-items: center; vertical-align: middle; width: 20px; height: 20px; margin: -2px 11px 0 4px; border-radius: 50%; background: #fff; border: 1px solid #556; }
.knob svg { width: 14px; height: 14px; }
.fmea .sub th { height: 18px; line-height: 17px; padding-left: 36px; background: #add8e6; color: #1414ff; border-top: 1px solid #5f86a8; }
.fmea td { height: 22px; line-height: 20px; padding: 0 4px; background: #fff; border-right: 1px solid #000; border-bottom: 1px solid #000; }
.fmea td:nth-child(2), .fmea td:nth-child(4) { padding: 0 1px; }
.fmea td.gut { border-left: 6px solid #00215a; border-right: 0; background: #f0f0f0; padding: 0; }
.fmea td a { display: inline-block; height: 21px; color: #1a6cc8; text-decoration: none; border-bottom: 1px solid #0a5cc0; vertical-align: top; }
.fmea .gf td { height: 13px; border: 0; padding: 0; background: #f0f0f0; vertical-align: top; }
.gf div { height: 7px; background: #00215a; border-radius: 0 0 6px 6px; }
.rail { width: 21px; flex: none; background: #f0f0f0; border-right: 1px solid #ccc; padding: 4px; }

.side { display: flex; flex-direction: column; min-width: 0; }
.sidetop { display: grid; grid-template-columns: 353px 1fr; gap: 1px; height: 355px; flex: none; }
.options { height: 352px; background: #d3d3d3; border: 1px solid #222; border-bottom-width: 2px; font-size: 13px; line-height: 18px; }
.options h2 { height: 27px; margin-bottom: 8px; padding-left: 7px; background: #008000; border-bottom: 1px solid #555; font-size: 17px; font-weight: 700; line-height: 28px; color: #0a0a0a; }
fieldset { margin: 0 6px 9px; padding: 4px 9px 9px 11px; border: 2px solid #eaeff5; border-radius: 5px; min-width: 0; }
legend { padding: 0 5px 0 8px; margin-left: -10px; }
.f1 { height: 70px; }
.f2 { height: 120px; padding-top: 6px; }
.f3 { height: 103px; margin-bottom: 0; }
.options label { display: block; height: 18px; }
.options .check { display: flex; align-items: center; gap: 6px; }
input[type="checkbox"] { appearance: none; width: 16px; height: 16px; margin: 0 0 0 1px; border: 1px solid #707070; background: #fff; }
input[type="checkbox"]:checked { display: grid; place-items: center; }
input[type="checkbox"]:checked::after { content: ""; width: 5px; height: 10px; border: solid #222; border-width: 0 2px 2px 0; transform: rotate(40deg); margin-top: -3px; }
.options input:not([type]) { height: 24px; padding: 0 4px; border: 1px solid #abadb3; background: #fff; min-width: 0; }
.line { display: flex; gap: 6px; }
.line .wide { flex: 1; }
.line button { width: 53px; height: 24px; border: 1px solid #707070; background: #ddd; }
.per { display: flex; align-items: center; gap: 7px; }
.options .per input { width: 62px; height: 21px; }
.pager { display: flex; align-items: center; margin: 6px 0 0 5px; gap: 6px; color: #999; }
.pager button { width: 35px; height: 24px; border: 1px solid #b8bcc0; background: #f2f2f2; }
.pager button:first-child, .pager button:nth-last-child(2) { margin-right: 6px; }
.pager input { width: 46px; color: #333; }
.pager .total { width: 58px; }
.pager span { width: 8px; text-align: center; color: #333; }
.pandtree { width: 100%; height: 100%; overflow: hidden; }

.report { flex: 1; padding: 9px 0 0 7px; font-size: 9px; line-height: 20px; min-width: 0; overflow: hidden; background: #fff; }
.report h3 { font-size: 12px; font-weight: 700; line-height: 20px; color: #000; margin-bottom: 11px; }
.report p { height: 22px; }
.report p span { margin-left: 15px; }
.report a { color: #0a63c4; }
.report hr { margin: 2px 0 8px; border: 0; border-top: 1px solid #aaa; height: 0; }
.report hr + h3 { margin-bottom: 6px; }
.report table { width: calc(100% - 9px); margin-left: 9px; table-layout: fixed; border-collapse: separate; border-spacing: 0; border: 1px solid #6f8fbf; border-right: 0; }
.report th, .report td { padding: 0 0 0 2px; height: 16px; line-height: 14px; text-align: left; font-weight: 400; white-space: nowrap; border-right: 1px solid #000; border-bottom: 1px solid #000; }
.report td { padding-left: 3px; }
.report td:nth-child(2), .report td:nth-child(n+5) { padding-left: 0; }
.report th { height: 20px; line-height: 18px; padding-left: 5px; border-right-color: #ddd; border-bottom-color: #ccc; background: linear-gradient(#fff, #f2f3f5); }
.report td.g { border-color: #ddd; border-right-color: #000; background: #f0f0f0; padding: 0; }
.report td a { text-decoration: none; }
.report td:last-child, .report th:last-child { border-right: 0; }
col.g { width: 5px; } col.w { width: 150px; } col.n { width: 76px; }

.lower { flex: 1; min-height: 0; display: grid; grid-template-columns: 1124fr 821fr; }
.modeller { display: grid; grid-template: minmax(0, 1fr) / minmax(0, 1fr) 12px 213px; min-width: 0; min-height: 0; padding-left: 2px; background: linear-gradient(#e0362c, #e0362c) left top / 1px 532px no-repeat; }
.diagram, .states { width: 100%; height: 100%; min-height: 0; overflow: hidden; }
.slim { grid-area: 1 / 2; grid-template-rows: 8px 470px 1fr; margin-bottom: 5px; }
.slim svg { width: 8px; height: 8px; margin: 0; }
.small { grid-area: 1 / 3; margin-bottom: 5px; font-size: 8px; line-height: 12px; }
.small .preview { aspect-ratio: auto; height: 210px; flex: none; align-items: flex-start; border-width: 0 0 1px 1px; padding: 19px 0 24px; background: linear-gradient(#d3d3d3 19px, #fff 19px 185px, #d3d3d3 185px); }
.small .preview svg { width: 136px; }
.small .props { border-left-width: 15px; padding: 10px 5px 0 7px; }
.small .props h2 { font-size: 14px; line-height: 24px; height: 26px; margin: 0 4px 7px; }
.small .props label { margin: 0 4px; height: 14px; line-height: 14px; }
.small .props input { height: 13px; padding: 0 2px; margin-bottom: 7px; line-height: 11px; }
.small .props textarea { height: 35px; margin-bottom: 6px; }
.small .props input + label { margin-top: 1px; }
.small .props .has { display: flex; align-items: center; gap: 5px; margin: 1px 4px 5px; }
.small .props .has input { width: 11px; height: 11px; margin: 0; padding: 0; }
.small .props button { height: 22px; margin: 0 4px 7px; border: 1px solid #707070; background: #ddd; flex: none; }
.small .props button:disabled { border-color: #adb2b5; background: #f4f4f4; color: #838383; }
.small .props .fail { margin-top: 3px; }
.small .props select { height: 15px; margin: 2px 0 4px; padding: 0 4px; border: 1px solid #d9d9d9; background: #f0f0f0; color: #111; opacity: 1; appearance: none; flex: none; line-height: 12px; }
```
